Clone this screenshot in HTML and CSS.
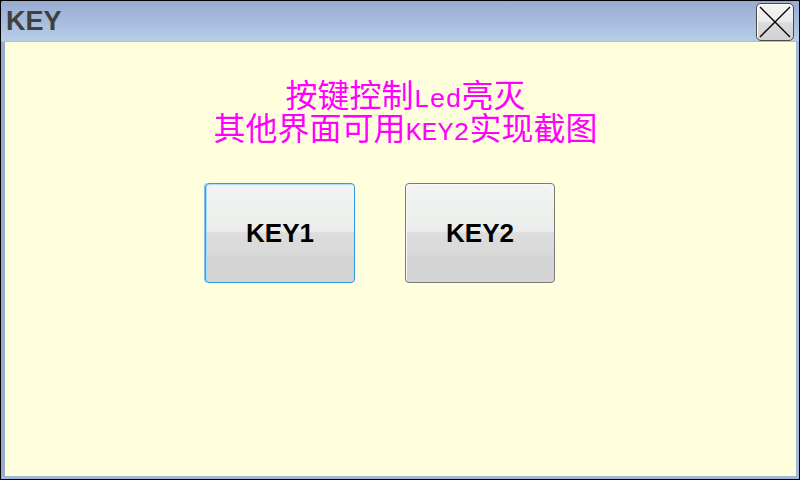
FILE: index.html
```html
<!DOCTYPE html>
<html>
<head>
<meta charset="utf-8">
<link rel="stylesheet" href="styles.css">
</head>
<body>
<div class="window">
  <div class="titlebar">
    <span class="title">KEY</span>
    <div class="close">
      <svg width="36" height="36" viewBox="0 0 36 36"><path d="M3 3 L33 33 M33 3 L3 33" stroke="#000" stroke-width="1.3" fill="none"/></svg>
    </div>
  </div>
  <div class="content">
    <div class="msg">
      <p>按键控制<span class="lat">Led</span>亮灭</p>
      <p>其他界面可用<span class="lat">KEY2</span>实现截图</p>
    </div>
    <div class="btns">
      <div class="btn focus">KEY1</div>
      <div class="btn">KEY2</div>
    </div>
  </div>
</div>
</body>
</html>
```
FILE: styles.css
```css
html, body {
  margin: 0;
  padding: 0;
  background: #000;
}
.window {
  width: 800px;
  height: 480px;
  box-sizing: border-box;
  border: 1px solid #000;
  border-radius: 3px 0 0 0;
  display: flex;
  flex-direction: column;
  background: #a4b6d6;
  overflow: hidden;
}
.titlebar {
  height: 40px;
  flex: none;
  display: flex;
  justify-content: space-between;
  align-items: flex-start;
  background: linear-gradient(#98acd2, #a6bcde 50%, #b6cee8);
  border-bottom: 1px solid #a8c0e0;
}
.title {
  font-family: "Liberation Sans", Arial, sans-serif;
  font-weight: bold;
  font-size: 27px;
  color: #404040;
  margin: 5px 0 0 5px;
  line-height: 30px;
}
.close {
  width: 36px;
  height: 36px;
  margin: 2px 5px 0 0;
  border: 1px solid #4a4a4a;
  border-radius: 5px;
  background: linear-gradient(#f4f4f4, #ececec 48%, #dadada 52%, #d2d2d2);
  box-shadow: inset 1px 1px 0 #fff;
}
.close svg {
  display: block;
}
.content {
  flex: 1;
  background: #ffffdd;
  border-left: 4px solid #9aaccc;
  border-right: 3px solid #a4b8d8;
  border-bottom: 2px solid #a4b8d8;
  margin-bottom: 1px;
  display: flex;
  flex-direction: column;
}
.msg {
  margin-top: 35px;
  padding-left: 10px;
  text-align: center;
  color: #ff00ff;
  font-family: "Noto Sans CJK SC", sans-serif;
  font-size: 32px;
  line-height: 33px;
}
.msg p {
  margin: 0;
  height: 33px;
}
.lat {
  font-family: "Liberation Mono", monospace;
  font-size: 26.67px;
}
.btns {
  display: flex;
  gap: 50px;
  margin-top: 40px;
  padding-left: 200px;
}
.btn {
  width: 150px;
  height: 100px;
  box-sizing: border-box;
  border: 1px solid #7a7a7a;
  border-radius: 4px;
  background: linear-gradient(#f3f3f3 0%, #eef2ee 22%, #ececec 48%, #dcdcdc 50%, #dadada 72%, #d4d4d4 74%, #d4d4d4 100%);
  box-shadow: inset 1px 1px 0 #fafafa;
  display: flex;
  align-items: center;
  justify-content: center;
  font-family: "Liberation Sans", Arial, sans-serif;
  font-weight: bold;
  font-size: 26px;
  color: #000;
}
.btn.focus {
  border: 1px solid #2f9ee0;
  box-shadow: inset 1px 1px 0 #a8dcf8, -1px 0 0 #7cc4f0;
}
```
